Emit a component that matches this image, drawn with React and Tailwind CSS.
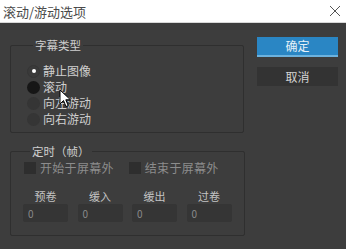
const font = { fontFamily: '"Noto Sans CJK SC", "Noto Sans", sans-serif' };

const Radio = ({ label, state }) => {
    return (
        <div className="flex items-center h-[16px] gap-[3px]">
            {state === 'checked' && (
                <span className="w-[13px] h-[13px] rounded-full bg-[#3a3a3a] border border-[#353535] flex items-center justify-center">
                    <span className="w-[4px] h-[4px] rounded-full bg-white" />
                </span>
            )}
            {state === 'pressed' && <span className="w-[13px] h-[13px] rounded-full bg-[#161616]" />}
            {state === 'idle' && <span className="w-[13px] h-[13px] rounded-full bg-[#353535]" />}
            <span className="text-[12px] leading-none text-[#cfcfcf]">{label}</span>
        </div>
    );
};

const Field = ({ label }) => {
    return (
        <div className="flex flex-col items-center w-[45px]">
            <span className="text-[11px] leading-[12px] text-[#c4c4c4]">{label}</span>
            <div className="mt-[2px] w-[45px] h-[18px] bg-[#353535] rounded-[2px] flex items-center px-[5px] text-[10px] text-[#8a8a8a]">0</div>
        </div>
    );
};

const Check = ({ label }) => {
    return (
        <div className="flex items-center gap-[4px]">
            <span className="w-[12px] h-[12px] bg-[#2e2e2e]" />
            <span className="text-[12px] leading-none text-[#8c8c8c] tracking-[0.3px]">{label}</span>
        </div>
    );
};

export default function App() {
    return (
        <div className="w-[346px] h-[249px] bg-[#3d3d3d] flex flex-col overflow-hidden relative" style={font}>
            {/* title bar */}
            <div className="h-[23px] bg-white flex items-center justify-between pl-[3px] pr-[5px] border-b border-[#d8d8d8]">
                <span className="text-[13px] leading-none text-[#4a4a4a]">滚动/游动选项</span>
                <svg width="12" height="12" viewBox="0 0 12 12" className="text-[#555]">
                    <path d="M1 1 L11 11 M11 1 L1 11" stroke="currentColor" strokeWidth="1" />
                </svg>
            </div>

            <div className="flex flex-1">
                <div className="flex flex-col pl-[10px] w-[256px]">
                    <fieldset className="mt-[16px] w-[234px] h-[94px] border border-[#2f2f2f] rounded-[2px] pl-[16px] pt-[12px]">
                        <legend className="ml-[6px] px-[2px] text-[11.5px] leading-[12px] text-[#cfcfcf]">字幕类型</legend>
                        <Radio label="静止图像" state="checked" />
                        <Radio label="滚动" state="pressed" />
                        <Radio label="向左游动" state="idle" />
                        <Radio label="向右游动" state="idle" />
                    </fieldset>

                    <fieldset className="mt-[12px] w-[235px] h-[91px] border border-[#2f2f2f] rounded-[2px] pl-[13px] pt-[5px]">
                        <legend className="ml-[6px] px-[2px] text-[11.5px] leading-[12px] text-[#cfcfcf]">定时（帧）</legend>
                        <div className="flex gap-[15px]">
                            <Check label="开始于屏幕外" />
                            <Check label="结束于屏幕外" />
                        </div>
                        <div className="flex gap-[9.5px] mt-[16px] -ml-[1px]">
                            <Field label="预卷" />
                            <Field label="缓入" />
                            <Field label="缓出" />
                            <Field label="过卷" />
                        </div>
                    </fieldset>
                </div>

                <div className="flex flex-col pt-[14px] pl-[1px] gap-[10px]">
                    <button className="w-[81px] h-[20px] bg-[#2a86c4] border-b-2 border-[#6cb2de] text-[12px] leading-none text-[#e6f1f8]">确定</button>
                    <button className="w-[81px] h-[19px] bg-[#333333] text-[12px] leading-none text-[#d4d4d4]">取消</button>
                </div>
            </div>

            {/* mouse pointer */}
            <svg className="absolute left-[59px] top-[89px]" width="13" height="19" viewBox="0 0 13 19">
                <path d="M1 1 L1 15 L4.5 11.5 L7 17.5 L9.2 16.6 L6.8 10.8 L11.5 10.8 Z" fill="white" stroke="black" strokeWidth="1" strokeLinejoin="round" />
            </svg>
        </div>
    );
}
